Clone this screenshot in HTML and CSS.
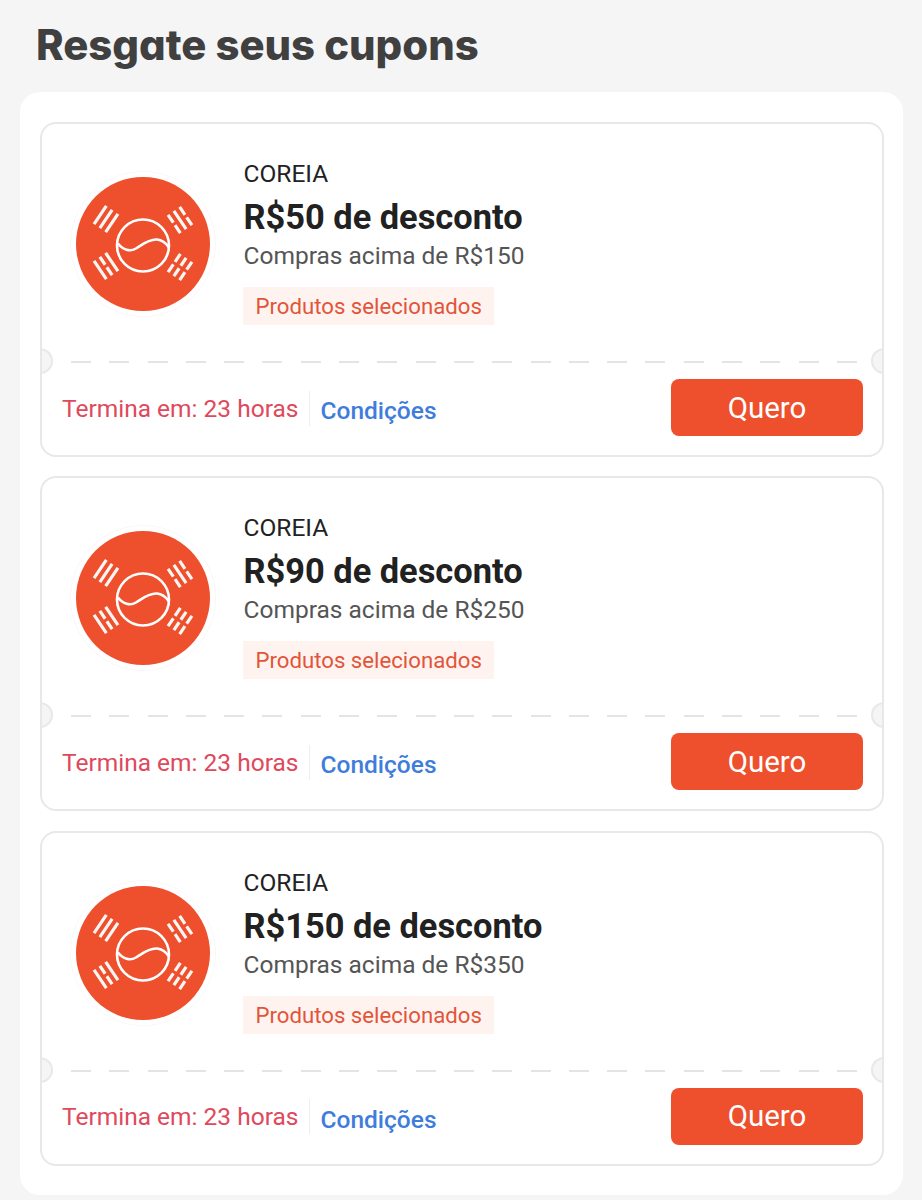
FILE: index.html
```html
<!DOCTYPE html>
<html lang="pt-BR">
<head>
<meta charset="utf-8">
<title>Resgate seus cupons</title>
<link rel="stylesheet" href="styles.css">
</head>
<body>
<svg class="defs" width="0" height="0" aria-hidden="true">
  <symbol id="flag" viewBox="0 0 146 146">
    <circle cx="73" cy="73" r="72.5" fill="#fff" stroke="#f8f8f8" stroke-width="1"/>
    <circle cx="73" cy="73" r="67" fill="#ee4f2c"/>
    <g fill="none" stroke="#fff" stroke-width="2.6">
      <circle cx="73" cy="74.5" r="26"/>
      <path d="M48 72.500C53 79 60 81 66 77.500C72 74 78 68 87 68.500C92 69 96 72 99 76.500"/>
    </g>
    <g stroke="#fff" stroke-width="3.200" fill="none" stroke-opacity="0.95">
      <path transform="translate(36 48) rotate(-56)" d="M-11 -7H11M-11 0H11M-11 7H11"/>
      <path transform="translate(110 49) rotate(56)" d="M-11 -7H-1.500M1.500 -7H11M-11 0H11M-11 7H-1.500M1.500 7H11"/>
      <path transform="translate(36 95) rotate(56)" d="M-11 -7H11M-11 0H-1.500M1.500 0H11M-11 7H11"/>
      <path transform="translate(110 96) rotate(-56)" d="M-11 -7H-1.500M1.500 -7H11M-11 0H-1.500M1.500 0H11M-11 7H-1.500M1.500 7H11"/>
    </g>
  </symbol>
</svg>
<h1 class="page-title">Resgate seus cupons</h1>
<main class="panel">
  <article class="coupon">
    <span class="notch notch-left"></span><span class="notch notch-right"></span>
    <div class="coupon-top">
      <svg class="flag"><use href="#flag"/></svg>
      <div class="info">
        <div class="region">COREIA</div>
        <div class="amount">R$50 de desconto</div>
        <div class="minimum">Compras acima de R$150</div>
        <div class="tag">Produtos selecionados</div>
      </div>
    </div>
    <div class="dashes"></div>
    <div class="coupon-bottom">
      <div class="meta"><span class="expires">Termina em: 23 horas</span><span class="terms">Condições</span></div>
      <button class="claim" type="button">Quero</button>
    </div>
  </article>
  <article class="coupon">
    <span class="notch notch-left"></span><span class="notch notch-right"></span>
    <div class="coupon-top">
      <svg class="flag"><use href="#flag"/></svg>
      <div class="info">
        <div class="region">COREIA</div>
        <div class="amount">R$90 de desconto</div>
        <div class="minimum">Compras acima de R$250</div>
        <div class="tag">Produtos selecionados</div>
      </div>
    </div>
    <div class="dashes"></div>
    <div class="coupon-bottom">
      <div class="meta"><span class="expires">Termina em: 23 horas</span><span class="terms">Condições</span></div>
      <button class="claim" type="button">Quero</button>
    </div>
  </article>
  <article class="coupon">
    <span class="notch notch-left"></span><span class="notch notch-right"></span>
    <div class="coupon-top">
      <svg class="flag"><use href="#flag"/></svg>
      <div class="info">
        <div class="region">COREIA</div>
        <div class="amount">R$150 de desconto</div>
        <div class="minimum">Compras acima de R$350</div>
        <div class="tag">Produtos selecionados</div>
      </div>
    </div>
    <div class="dashes"></div>
    <div class="coupon-bottom">
      <div class="meta"><span class="expires">Termina em: 23 horas</span><span class="terms">Condições</span></div>
      <button class="claim" type="button">Quero</button>
    </div>
  </article>
</main>
</body>
</html>
```
FILE: styles.css
```css
* { box-sizing: border-box; }
html, body { margin: 0; height: 1200px; overflow: hidden; }
body { background: #f5f5f5; font-family: Roboto, "Liberation Sans", sans-serif; }
.defs { position: absolute; }
.page-title {
  margin: 0;
  height: 92px;
  padding: 16px 0 0 36px;
  font-family: Inter, "Liberation Sans", sans-serif;
  font-feature-settings: "cv11" 1;
  font-size: 41.800px;
  line-height: 58px;
  font-weight: 800;
  color: #404040;
}
.panel {
  margin: 0 19px 0 20px;
  height: 1103px;
  padding: 30px 19px 0 20px;
  background: #fff;
  border-radius: 20px;
  display: flex;
  flex-direction: column;
  gap: 19.400px;
}
.coupon {
  position: relative;
  height: 335px;
  border: 2px solid #e8e8e8;
  border-radius: 16px;
  background: #fff;
  overflow: hidden;
  flex: none;
}
.notch {
  position: absolute;
  top: 224px;
  width: 26px;
  height: 26px;
  border-radius: 50%;
  background: #f5f5f5;
  border: 2px solid #e8e8e8;
}
.notch-left { left: -15px; }
.notch-right { right: -15px; }
.coupon-top {
  height: 237px;
  padding: 46px 0 0 28px;
  display: flex;
  align-items: flex-start;
}
.flag { width: 146px; height: 146px; margin-top: 1px; flex: none; }
.info { margin: -11px 0 0 27.500px; }
.region { font-size: 24.500px; line-height: 30px; color: #222; }
.amount { margin-top: 6px; font-size: 34.400px; line-height: 44px; font-weight: 700; color: #212121; }
.minimum { margin-top: 2px; font-size: 24.500px; line-height: 30px; color: #555; }
.tag {
  margin-top: 16px;
  margin-left: -0.500px;
  width: 251px;
  height: 38px;
  padding-left: 12.500px;
  background: #fff3f0;
  font-size: 22.200px;
  line-height: 38px;
  color: #e2553a;
  white-space: nowrap;
}
.dashes {
  height: 2px;
  margin: 0 24px 0 29px;
  background: repeating-linear-gradient(to right, #e4e4e4 0 20px, transparent 20px 38.300px);
}
.coupon-bottom {
  padding: 16px 19px 0 20px;
  display: flex;
  justify-content: space-between;
  align-items: flex-start;
}
.meta { display: flex; align-items: flex-start; padding-top: 11.500px; }
.expires {
  padding-right: 11px;
  height: 35px;
  border-right: 1px solid #eee;
  font-size: 24.500px;
  line-height: 35px;
  color: #e0495c;
  white-space: nowrap;
}
.terms {
  margin-left: 10px;
  font-size: 24.500px;
  line-height: 35px;
  font-weight: 500;
  color: #3f7ddc;
  padding-top: 2.500px;
}
.claim {
  width: 192px;
  height: 57px;
  border: 0;
  border-radius: 8px;
  background: #ee4f2c;
  color: #fff;
  font-family: Roboto, "Liberation Sans", sans-serif;
  font-size: 29.500px;
  padding: 0;
}
```
